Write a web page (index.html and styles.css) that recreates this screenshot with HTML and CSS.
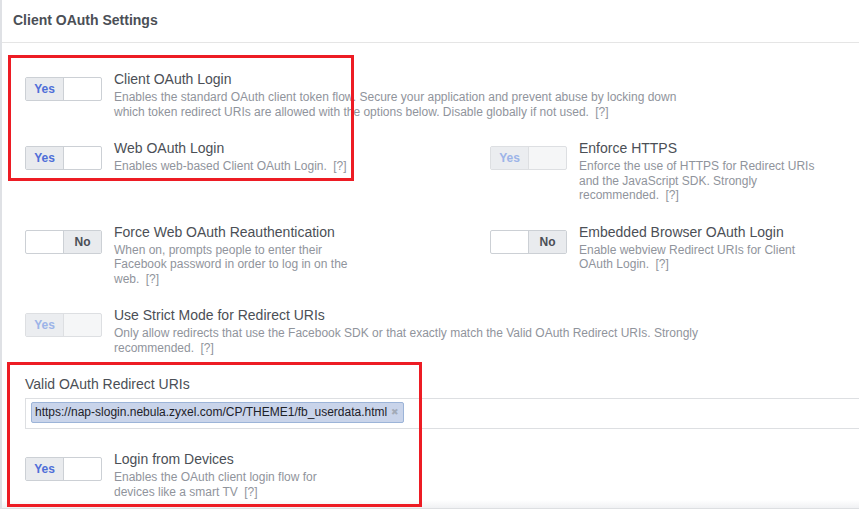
FILE: index.html
```html
<html><head>
<meta charset="utf-8">
<title>Client OAuth Settings</title>
<link rel="stylesheet" href="styles.css">
</head>
<body>
<div class="panel">
  <div class="panelHeader">Client OAuth Settings</div>

  <div class="panelBody">
    <div class="row">
      <div class="setting wide">
        <div class="toggle"><span class="seg on">Yes</span><span class="seg"></span></div>
        <div class="info">
          <div class="title">Client OAuth Login</div>
          <div class="desc">Enables the standard OAuth client token flow. Secure your application and prevent abuse by locking down which token redirect URIs are allowed with the options below. Disable globally if not used. <span class="help">[?]</span></div>
        </div>
      </div>
    </div>

    <div class="row two">
      <div class="setting">
        <div class="toggle"><span class="seg on">Yes</span><span class="seg"></span></div>
        <div class="info">
          <div class="title">Web OAuth Login</div>
          <div class="desc">Enables web-based Client OAuth Login. <span class="help">[?]</span></div>
        </div>
      </div>
      <div class="setting">
        <div class="toggle disabled"><span class="seg on">Yes</span><span class="seg"></span></div>
        <div class="info">
          <div class="title">Enforce HTTPS</div>
          <div class="desc">Enforce the use of HTTPS for Redirect URIs and the JavaScript SDK. Strongly recommended. <span class="help">[?]</span></div>
        </div>
      </div>
    </div>

    <div class="row two">
      <div class="setting">
        <div class="toggle"><span class="seg"></span><span class="seg off">No</span></div>
        <div class="info">
          <div class="title">Force Web OAuth Reauthentication</div>
          <div class="desc">When on, prompts people to enter their Facebook password in order to log in on the web. <span class="help">[?]</span></div>
        </div>
      </div>
      <div class="setting">
        <div class="toggle"><span class="seg"></span><span class="seg off">No</span></div>
        <div class="info">
          <div class="title">Embedded Browser OAuth Login</div>
          <div class="desc">Enable webview Redirect URIs for Client OAuth Login. <span class="help">[?]</span></div>
        </div>
      </div>
    </div>

    <div class="row">
      <div class="setting wide">
        <div class="toggle disabled"><span class="seg on">Yes</span><span class="seg"></span></div>
        <div class="info">
          <div class="title">Use Strict Mode for Redirect URIs</div>
          <div class="desc">Only allow redirects that use the Facebook SDK or that exactly match the Valid OAuth Redirect URIs. Strongly recommended. <span class="help">[?]</span></div>
        </div>
      </div>
    </div>

    <div class="field">
      <div class="fieldLabel">Valid OAuth Redirect URIs</div>
      <div class="tokens">
        <span class="token">https://nap-slogin.nebula.zyxel.com/CP/THEME1/fb_userdata.html<span class="tokenRemove">&#x2716;</span></span>
      </div>
    </div>

    <div class="row last">
      <div class="setting">
        <div class="toggle"><span class="seg on">Yes</span><span class="seg"></span></div>
        <div class="info">
          <div class="title">Login from Devices</div>
          <div class="desc">Enables the OAuth client login flow for devices like a smart TV <span class="help">[?]</span></div>
        </div>
      </div>
    </div>
  </div>

  <div class="panelFooter"></div>
</div>

<!-- annotation marks -->
<div class="mark markTop"></div>
<div class="mark markBottom"></div>
</body></html>
```

FILE: styles.css
```css
html, body {
  margin: 0;
  height: 100%;
  overflow: hidden;
  background: #fff;
}

body {
  position: relative;
  font-family: "Liberation Sans", Arial, sans-serif;
  color: #4b4f56;
}

.panel {
  border-left: 2px solid #dfe1e5;
  min-height: 100%;
  box-sizing: border-box;
}

.panelHeader {
  height: 43px;
  box-sizing: border-box;
  padding: 11px 0 0 11px;
  line-height: 18px;
  font-size: 14px;
  font-weight: bold;
  color: #4b4f56;
  border-bottom: 1px solid #e5e5e5;
}

.panelBody {
  display: flex;
  flex-direction: column;
  gap: 20px;
  padding: 27px 0 0 23px;
}

.row.two {
  display: grid;
  grid-template-columns: 465px 1fr;
}

.row.last {
  margin-top: 1px;
}

.setting {
  display: flex;
  align-items: flex-start;
  gap: 12px;
}

.info {
  max-width: 242px;
}

.wide .info {
  max-width: 590px;
}

.title {
  font-size: 14px;
  line-height: 18px;
  margin-bottom: 2px;
  color: #4b4f56;
}

.desc {
  font-size: 12px;
  line-height: 14.5px;
  color: #90949c;
}

.help {
  display: inline-block;
  margin-left: 3px;
  color: #90949c;
}

/* toggle */
.toggle {
  display: flex;
  flex: none;
  width: 77px;
  height: 24px;
  margin-top: 7px;
  box-sizing: border-box;
  border: 1px solid #ccd0d5;
  border-radius: 2px;
  background: #fff;
  overflow: hidden;
}

.seg {
  width: 37px;
  text-align: center;
  font-size: 12px;
  font-weight: bold;
  line-height: 22px;
}

.seg + .seg {
  flex: 1;
  border-left: 1px solid #ccd0d5;
}

.seg.on {
  background: #e9ebee;
  color: #4f6fd8;
}

.seg.off {
  background: #e9ebee;
  color: #4b4f56;
}

.toggle.disabled {
  border-color: #dddfe2;
  background: #f5f6f7;
}

.toggle.disabled .seg + .seg {
  border-left-color: #dddfe2;
}

.toggle.disabled .seg.on {
  background: #ebedf0;
  color: #9cb4e8;
}

/* redirect uris */
.fieldLabel {
  font-size: 14px;
  line-height: 18px;
  color: #4b4f56;
}

.tokens {
  margin-top: 5px;
  height: 31px;
  box-sizing: border-box;
  border: 1px solid #dddfe2;
  border-right: none;
  padding: 3px 0 0 5px;
}

.token {
  display: inline-flex;
  align-items: center;
  height: 21px;
  box-sizing: border-box;
  padding: 0 4px 1px 3px;
  border: 1px solid #9cb4d8;
  border-radius: 2px;
  background: #c9d4ea;
  font-size: 12px;
  color: #1d2129;
}

.tokenRemove {
  margin-left: 4px;
  font-size: 9px;
  color: #a3abb8;
}

.panelFooter {
  height: 8px;
  margin-top: 1px;
  background: linear-gradient(#fff, #f0f1f3);
  border-bottom: 1px solid #dddfe2;
}

/* red annotation boxes */
.mark {
  position: absolute;
  border: 3px solid #ed1c24;
  box-sizing: border-box;
}

.markTop {
  left: 8px;
  top: 55px;
  width: 346px;
  height: 126px;
}

.markBottom {
  left: 7px;
  top: 362px;
  width: 415px;
  height: 145px;
}
```
